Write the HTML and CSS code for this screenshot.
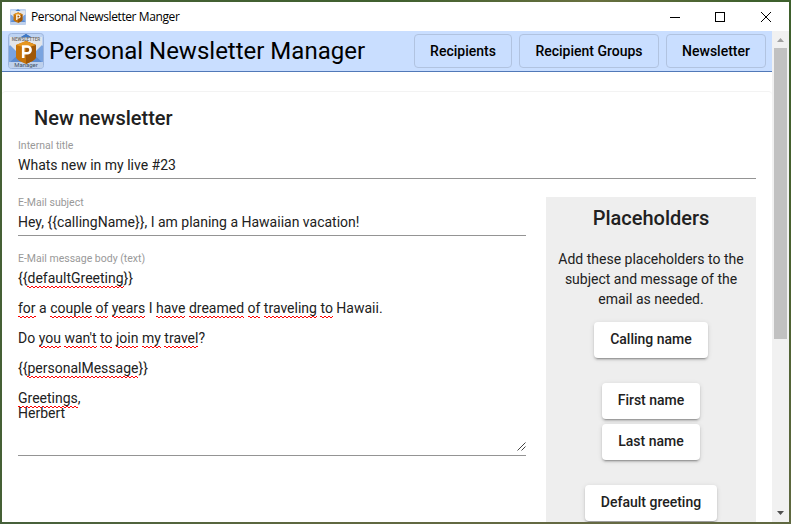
FILE: index.html
```html
<!DOCTYPE html>
<html lang="en">
<head>
<meta charset="utf-8">
<title>Personal Newsletter Manger</title>
<link rel="stylesheet" href="styles.css">
</head>
<body>
<svg width="0" height="0" class="defs">
  <symbol id="logo" viewBox="0 0 36 36">
    <rect x=".5" y=".5" width="35" height="35" rx="3" fill="#bdd3f3" stroke="#9cb4dc"/>
    <path d="M1 13 18 1l17 12v17H1z" fill="#79a3df"/>
    <path d="M12 5 18 1l6 4z" fill="#3e79c6"/>
    <path d="M2 4h32v8l-9 9H11l-9-9z" fill="#e2e5ea"/>
    <path d="M12 4.500 18 1l6 3.500z" fill="#3e79c6"/>
    <path d="M1 30 12 20h12l11 10z" fill="#5d8bce"/>
    <path d="M1 29h34v4a2 2 0 0 1-2 2H3a2 2 0 0 1-2-2z" fill="#bfd1ec"/>
    <path d="M18 8 28 12v12c0 3-6 5-10 7-4-2-10-4-10-7V12z" fill="#c67309"/>
    <path d="M18 8 28 12v12c0 3-6 5-10 7z" fill="#9f5708"/>
    <path d="M18 8 28 12l-10 3-10-3z" fill="#e69620"/>
    <path d="M15.200 25V13.500h4a3.300 3.300 0 0 1 0 6.800h-4" fill="none" stroke="#fff" stroke-width="2.600"/>
  </symbol>
</svg>
<div class="window">
  <div class="titlebar">
    <svg class="app-icon"><use href="#logo"/></svg>
    <span class="caption">Personal Newsletter Manger</span>
    <svg class="controls" width="102" height="12" viewBox="0 0 102 12" fill="none" stroke="#000" shape-rendering="crispEdges">
      <path d="M0 6.500h10M45.500 1.500h9v9h-9z"/>
      <path d="M91 1l10 10M101 1 91 11" shape-rendering="auto"/>
    </svg>
  </div>
  <div class="viewport">
    <div class="page">
      <header>
        <svg class="logo" viewBox="0 0 36 36"><use href="#logo"/><text x="18" y="8" class="logo-top">NEWSLETTER</text><text x="18" y="33.500" class="logo-bottom">Manager</text></svg>
        <h1>Personal Newsletter Manager</h1>
        <nav><a class="w1">Recipients</a><a class="w2">Recipient Groups</a><a class="w3">Newsletter</a></nav>
      </header>
      <main>
        <h2>New newsletter</h2>
        <div class="field title-field"><label>Internal title</label><div class="value">Whats new in my live #23</div></div>
        <div class="columns">
          <div class="left">
            <div class="field"><label>E-Mail subject</label><div class="value subject">Hey, {{callingName}}, I am planing a Hawaiian vacation!</div></div>
            <div class="field message"><label>E-Mail message body (text)</label>
              <div class="body-text">
                <p>{{<i>defaultGreeting</i>}}</p>
                <p><i>for</i> a <i>couple</i> <i>of</i> <i>years</i> I <i>have</i> <i>dreamed</i> <i>of</i> <i>traveling</i> <i>to</i> Hawaii.</p>
                <p>Do <i>you</i> <i>wan't</i> <i>to</i> <i>join</i> <i>my</i> <i>travel</i>?</p>
                <p>{{<i>personalMessage</i>}}</p>
                <p><i>Greetings</i>,<br>Herbert</p>
                <svg class="grip" width="9" height="9" viewBox="0 0 9 9" stroke="#444" fill="none"><path d="M.5 8.500l8-8M4.500 8.500l4-4"/></svg>
              </div>
            </div>
          </div>
          <aside>
            <h3>Placeholders</h3>
            <p>Add these placeholders to the subject and message of the email as needed.</p>
            <button class="b1">Calling name</button>
            <button class="b2 gap">First name</button>
            <button class="b2">Last name</button>
            <button class="b3 gap">Default greeting</button>
          </aside>
        </div>
      </main>
    </div>
    <div class="scrollbar">
      <svg width="7" height="4" viewBox="0 0 7 4"><path d="M0 4 3.500 0 7 4z" fill="#a0a0a0"/></svg>
      <div class="thumb"></div>
      <svg class="down" width="7" height="4" viewBox="0 0 7 4"><path d="M0 0h7L3.500 4z" fill="#505050"/></svg>
    </div>
  </div>
</div>
</body>
</html>
```
FILE: styles.css
```css
* { box-sizing: border-box; }
body { margin: 0; padding: 2px; width: 791px; height: 524px; overflow: hidden; background: linear-gradient(90deg, #45603a, #5f6840 40%, #666a43 80%, #5f6840) 0 100% / 100% 2px no-repeat, linear-gradient(#3e602d, #4a612f 50%, #5f6840) 100% 0 / 2px 100% no-repeat, linear-gradient(90deg, #456035, #40602f 50%, #69703f 75%, #3e602d 95%); font-family: Roboto, sans-serif; color: #212121; }
.defs { position: absolute; }
.window { width: 787px; height: 520px; background: #fff; overflow: hidden; display: flex; flex-direction: column; }
.titlebar { height: 29px; flex: none; display: flex; align-items: center; padding: 0 17px 0 8px; color: #000; }
.app-icon { width: 16px; height: 16px; }
.caption { font: 12px/16px "Open Sans", "Noto Sans", sans-serif; letter-spacing: -.4px; margin-left: 5px; white-space: nowrap; }
.controls { margin-left: auto; }
.logo-top { font: 700 4.5px Roboto, sans-serif; fill: #777; text-anchor: middle; }
.logo-bottom { font: 400 6px Roboto, sans-serif; fill: #435268; text-anchor: middle; }
.viewport { flex: 1; display: flex; min-height: 0; }
.page { width: 770px; overflow: hidden; }
header { height: 41px; background: #c9deff; border-bottom: 1px solid #5179b8; display: flex; align-items: center; padding: 0 6px; color: #000; }
.logo { width: 36px; height: 36px; flex: none; }
h1 { font-size: 24px; font-weight: 400; line-height: 32px; margin: 0 0 0 5px; white-space: nowrap; }
nav { display: flex; gap: 7px; margin-left: auto; }
nav a { height: 34px; border: 1px solid #b1c3e0; border-radius: 4px; font-size: 14px; font-weight: 500; line-height: 32px; text-align: center; white-space: nowrap; }
.w1 { width: 98px; } .w2 { width: 140px; } .w3 { width: 100px; }
main { margin-top: 19px; border-top: 1px solid #f3f3f3; border-radius: 4px; padding: 0 16px; }
h2 { margin: 10px 0 0 16px; font-size: 20px; line-height: 32px; font-weight: 500; }
.field { border-bottom: 1px solid #949494; }
label { display: block; font-size: 10.5px; line-height: 12px; color: #999; }
.value { font-size: 14px; line-height: 16px; white-space: nowrap; }
.title-field { height: 45px; padding-top: 6px; }
.title-field .value { margin-top: 5px; }
.columns { display: flex; gap: 20px; margin-top: 18px; }
.left { width: 508px; }
.left .field { height: 39px; }
.subject { margin-top: 5px; }
.left .message { height: 203px; margin-top: 17px; }
.body-text { position: relative; height: 188px; padding-top: 6px; font-size: 14px; line-height: 15px; }
.body-text p { margin: 0 0 15px; }
.body-text i { font-style: normal; padding-bottom: 2px; background: linear-gradient(90deg, #f00 50%, transparent 50%) 0 calc(100% - 1px) / 4px 1px repeat-x, linear-gradient(90deg, transparent 50%, #f00 50%) 0 100% / 4px 1px repeat-x; }
.grip { position: absolute; right: 0; bottom: 2px; }
aside { width: 210px; height: 400px; background: #eee; display: flex; flex-direction: column; align-items: center; padding-top: 5px; }
h3 { margin: 0; font-size: 20px; line-height: 32px; font-weight: 500; }
aside p { margin: 15px 0 13px; width: 194px; text-align: center; font-size: 14px; line-height: 20px; }
button { height: 36px; flex: none; border: 0; padding: 0; margin-bottom: 5px; border-radius: 4px; background: #fff; color: #212121; font: 500 14px/34px Roboto, sans-serif; padding-bottom: 2px; box-shadow: 0 3px 1px -2px rgba(0,0,0,.2), 0 2px 2px rgba(0,0,0,.14), 0 1px 5px rgba(0,0,0,.12); }
.b1 { width: 114px; } .b2 { width: 98px; } .b3 { width: 132px; }
.gap { margin-top: 20px; }
.scrollbar { width: 17px; background: #f1f1f1; display: flex; flex-direction: column; align-items: center; padding: 7px 0; }
.thumb { width: 13px; height: 291px; margin-top: 6px; background: #c1c1c1; }
.down { margin-top: auto; }
```
